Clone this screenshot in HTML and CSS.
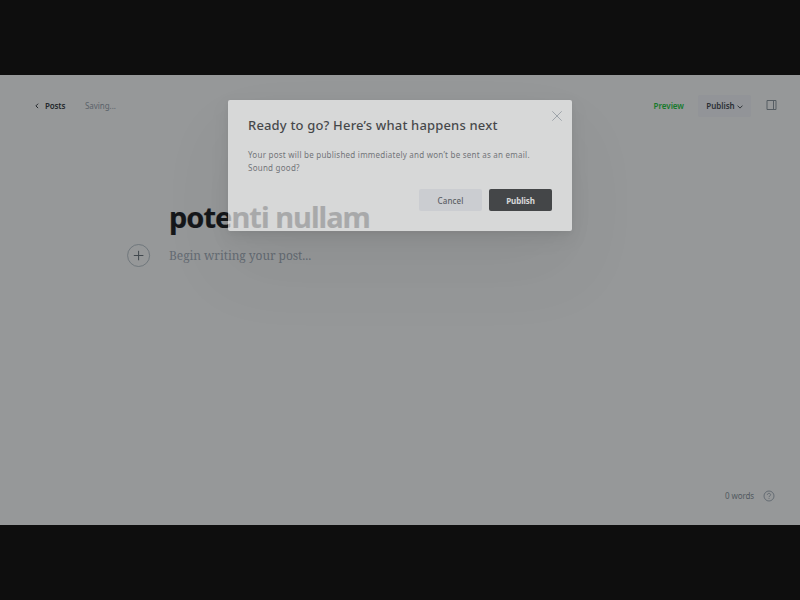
FILE: index.html
```html
<!DOCTYPE html>
<html lang="en">
<head>
<meta charset="utf-8">
<title>Editor</title>
<link rel="stylesheet" href="styles.css">
</head>
<body>
<div class="app">
  <header class="bar">
    <a class="back"><svg width="4" height="6" viewBox="0 0 4 6"><path d="M3.1.7.9 2.9l2.2 2.2"/></svg><span>Posts</span></a>
    <span class="status">Saving...</span>
    <span class="preview">Preview</span>
    <button class="menu"><span>Publish</span><svg width="6" height="4" viewBox="0 0 6 4"><path d="M.5.6 3 3.1 5.5.6"/></svg></button>
    <svg class="side" width="11" height="10" viewBox="0 0 11 10"><path d="M1 .5h9v9H1zM7.5.5v9"/></svg>
  </header>
  <main class="editor">
    <h1><span>potenti nullam</span></h1>
    <div class="body">
      <svg class="plus" width="24" height="24" viewBox="0 0 24 24"><circle cx="11.6" cy="11.5" r="11"/><path d="M11.6 6.8v9.5M6.8 11.5h9.6"/></svg>
      <p><span>Begin writing your post...</span></p>
    </div>
  </main>
  <footer class="foot">
    <span>0 words</span>
    <svg width="12" height="12" viewBox="0 0 12 12"><circle cx="6" cy="6" r="5"/><path d="M4.4 4.9C4.4 3.9 5 3.4 6 3.4s1.6.6 1.6 1.4C7.6 5.9 6 5.9 6 7.1M6 8v.8"/></svg>
  </footer>
</div>
<section class="modal">
  <svg class="close" width="10" height="10" viewBox="0 0 10 10"><path d="M.3.3l9.4 9.4M9.7.3.3 9.7"/></svg>
  <h2><span>Ready to go? Here’s what happens next</span></h2>
  <p><span class="line">Your post will be published immediately and won’t be sent as an email.</span><br><span>Sound good?</span></p>
  <div class="actions"><button class="cancel"><span>Cancel</span></button><button class="go"><span>Publish</span></button></div>
</section>
</body>
</html>
```
FILE: styles.css
```css
* { box-sizing: border-box; }
body { margin: 0; height: 600px; padding: 75px 0; background: #0e0e0e; overflow: hidden; font-family: "Noto Sans", "Open Sans", sans-serif; }
svg { display: block; flex: none; fill: none; stroke: #444b52; }
h1, h2, p { margin: 0; }
button { border: 0; padding: 0; font-family: inherit; border-radius: 2px; }
.app { height: 450px; background: #969899; display: flex; flex-direction: column; }
.bar { height: 61px; padding: 0 23px 0 35px; display: flex; align-items: center; font-size: 8px; color: #24282c; }
.back { display: flex; align-items: center; gap: 6px; width: 50px; font-weight: 600; letter-spacing: -.15px; }
.back svg { stroke: #24282c; }
.status { color: #5a6269; letter-spacing: -.05px; }
.preview { margin-left: auto; color: #167a2c; font-weight: 600; letter-spacing: -.02px; }
.menu { margin: 0 15px 0 14px; width: 53px; height: 22px; background: #929498; display: flex; align-items: center; justify-content: center; gap: 2px; font-size: 8px; font-weight: 600; color: #2b2f34; letter-spacing: -.05px; }
.menu svg { margin-top: 3px; stroke: #33383c; }
.side { margin-top: -1px; stroke: #555c62; }
.editor { padding: 59px 0 0 127px; flex: 1; }
h1 { margin-left: 42px; font-size: 29px; line-height: 44px; font-weight: 700; color: #15171a; letter-spacing: -.98px; white-space: nowrap; -webkit-text-stroke: .2px #15171a; }
.body { display: flex; align-items: center; gap: 18px; height: 33px; }
.plus { stroke: #666e75; stroke-width: .8; }
.plus path { stroke: #41484e; stroke-width: 1; }
.body p { font-family: "Noto Serif", "Liberation Serif", serif; font-size: 12px; color: #646b73; letter-spacing: -.06px; }
.foot { display: flex; align-items: center; justify-content: flex-end; gap: 9px; height: 58px; padding-right: 25px; font-size: 8px; color: #515960; letter-spacing: -.1px; }
.foot span { margin-top: -2px; }
.foot svg { stroke: #58616a; stroke-width: .8; }
.modal { position: absolute; left: 228px; top: 100px; width: 344px; height: 131px; padding: 15px 20px; background: #fefefe; border-radius: 2px; opacity: .63; box-shadow: 0 2px 5px rgba(0,0,0,.07), 0 8px 18px rgba(0,0,0,.1), 0 38px 70px rgba(0,0,0,.08); }
.close { position: absolute; right: 10px; top: 11px; stroke: #7c8894; stroke-width: .7; }
h2 { font-size: 13px; line-height: 20px; font-weight: 500; color: #15171a; letter-spacing: .17px; white-space: nowrap; }
.modal p { margin-top: 13px; font-size: 8px; line-height: 13px; color: #5c6167; letter-spacing: .24px; white-space: nowrap; }
.actions { display: flex; justify-content: flex-end; gap: 7px; margin-top: 15px; }
.actions button { width: 63px; height: 22px; font-size: 8px; font-weight: 500; letter-spacing: .08px; }
.cancel { background: #ebecf2; color: #394047; }
.actions .go { background: #15171a; color: #fff; font-weight: 700; letter-spacing: -.1px; }
```
